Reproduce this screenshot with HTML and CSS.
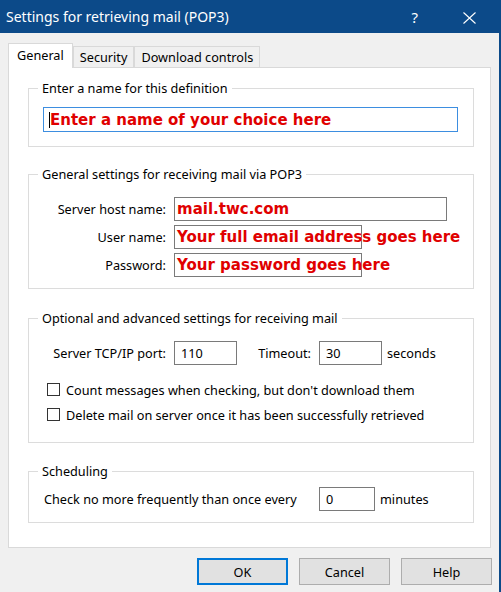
FILE: index.html
```html
<!DOCTYPE html>
<html lang="en">
<head>
<meta charset="utf-8">
<title>Settings for retrieving mail (POP3)</title>
<link rel="stylesheet" href="styles.css">
</head>
<body>
<div class="window">
  <div class="titlebar">
    <span class="title">Settings for retrieving mail (POP3)</span>
    <span class="tb-help">?</span>
    <svg class="tb-close" width="13" height="12" viewBox="0 0 13 12" aria-hidden="true"><path d="M0.5 0.5 L12.5 11.5 M12.5 0.5 L0.5 11.5" stroke="#fff" stroke-width="1.1" fill="none"/></svg>
  </div>
  <div class="frame">
    <div class="tabs">
      <div class="tab active">General</div>
      <div class="tab">Security</div>
      <div class="tab">Download controls</div>
    </div>
    <div class="panel">
      <fieldset class="group">
        <legend>Enter a name for this definition</legend>
        <div class="gb gb1">
          <div class="field focus"><span class="caret"></span><span class="val">Enter a name of your choice here</span></div>
        </div>
      </fieldset>

      <fieldset class="group g2">
        <legend>General settings for receiving mail via POP3</legend>
        <div class="gb gb2">
          <span class="lbl">Server host name:</span>
          <div class="field red f-host"><span class="val">mail.twc.com</span></div>
          <span class="lbl">User name:</span>
          <div class="field red f-user"><span class="val">Your full email address goes here</span></div>
          <span class="lbl">Password:</span>
          <div class="field red f-user"><span class="val">Your password goes here</span></div>
        </div>
      </fieldset>

      <fieldset class="group g3">
        <legend>Optional and advanced settings for receiving mail</legend>
        <div class="gb gb3">
          <div class="port-row">
            <span class="lbl lbl-port">Server TCP/IP port:</span>
            <div class="field num f-num">110</div>
            <span class="lbl lbl-timeout">Timeout:</span>
            <div class="field num f-num">30</div>
            <span class="unit">seconds</span>
          </div>
          <div class="checks">
            <div class="check"><span class="box"></span><span>Count messages when checking, but don't download them</span></div>
            <div class="check"><span class="box"></span><span>Delete mail on server once it has been successfully retrieved</span></div>
          </div>
        </div>
      </fieldset>

      <fieldset class="group g4">
        <legend>Scheduling</legend>
        <div class="gb gb4">
          <span class="lbl-sched">Check no more frequently than once every</span>
          <div class="field num f-min">0</div>
          <span class="unit">minutes</span>
        </div>
      </fieldset>
    </div>
    <div class="buttons">
      <div class="btn default">OK</div>
      <div class="btn">Cancel</div>
      <div class="btn">Help</div>
    </div>
  </div>
</div>
</body>
</html>
```
FILE: styles.css
```css
html, body {
  margin: 0;
  padding: 0;
}
body {
  font-family: "Noto Sans", "Open Sans", sans-serif;
  font-size: 12.7px;
  color: #000;
  background: #f0f0f0;
}
.window {
  width: 501px;
  height: 592px;
  display: flex;
  flex-direction: column;
  background: #f0f0f0;
  overflow: hidden;
}
.titlebar {
  flex: none;
  height: 33px;
  background: #0c4a89;
  color: #fff;
  display: flex;
  align-items: center;
  padding-left: 6px;
}
.title {
  flex: 1;
  font-size: 14px;
  line-height: 20px;
  white-space: nowrap;
}
.tb-help {
  font-size: 15px;
  line-height: 20px;
  margin-right: 45px;
}
.tb-close {
  margin-right: 25px;
  margin-top: 2px;
}
.frame {
  flex: 1;
  display: flex;
  flex-direction: column;
  border-right: 2px solid #0c4a89;
  padding: 10px 0 0 8px;
}
.tabs {
  display: flex;
  align-items: flex-end;
  height: 24px;
}
.tab {
  box-sizing: border-box;
  height: 21px;
  border: 1px solid #d9d9d9;
  border-bottom: none;
  background: #f0f0f0;
  padding: 0 6px;
  line-height: 20px;
  white-space: nowrap;
}
.tab.active {
  position: relative;
  z-index: 1;
  height: 25px;
  margin-bottom: -1px;
  background: #fff;
  padding: 0 8px;
  line-height: 22px;
}
.panel {
  box-sizing: border-box;
  width: 483px;
  height: 481px;
  border: 1px solid #d9d9d9;
  background: #fff;
  padding: 12px 0 0 19px;
}
.group {
  box-sizing: border-box;
  width: 446px;
  min-width: 0;
  margin: 0;
  padding: 0;
  border: 1px solid #dcdcdc;
}
.group legend {
  padding: 0 4px;
  margin-left: 9px;
  line-height: 16px;
  white-space: nowrap;
}
.g2 { margin-top: 19px; }
.g3 { margin-top: 21px; }
.g4 { margin-top: 20px; }

.field {
  box-sizing: border-box;
  height: 24px;
  border: 1px solid #7a7a7a;
  background: #fff;
  display: flex;
  align-items: center;
  white-space: nowrap;
}
.field.focus {
  height: 25px;
  border-color: #3d8ee0;
  padding-left: 5px;
}
.caret {
  flex: none;
  width: 1px;
  height: 16px;
  background: #000;
}
.val {
  color: #e00000;
  font-family: "DejaVu Sans", Verdana, sans-serif;
  font-weight: bold;
  font-size: 15px;
  line-height: 22px;
  white-space: nowrap;
}
.field.red {
  padding-left: 2px;
  overflow: visible;
}
.gb1 {
  padding: 11px 15px 14px 14px;
}
.gb2 {
  display: grid;
  grid-template-columns: 145px auto;
  row-gap: 4px;
  align-items: center;
  justify-items: start;
  padding: 15px 0 11px 0;
}
.lbl {
  box-sizing: border-box;
  text-align: right;
  padding-right: 8px;
  white-space: nowrap;
  justify-self: stretch;
}
.f-host { width: 273px; }
.f-user { width: 188px; }

.gb3 {
  padding: 15px 0 19px 0;
}
.port-row {
  display: flex;
  align-items: center;
  height: 24px;
}
.lbl-port { width: 145px; flex: none; }
.lbl-timeout { width: 82px; flex: none; }
.field.num {
  padding-left: 6px;
}
.f-num { width: 63px; flex: none; }
.unit {
  margin-left: 5px;
  white-space: nowrap;
}
.checks {
  margin-top: 16px;
  display: flex;
  flex-direction: column;
  gap: 8px;
}
.check {
  display: flex;
  align-items: center;
  height: 17px;
  padding-left: 18px;
  white-space: nowrap;
}
.box {
  flex: none;
  box-sizing: border-box;
  width: 13px;
  height: 13px;
  border: 1px solid #333;
  background: #fff;
  margin-right: 6px;
}
.gb4 {
  display: flex;
  align-items: center;
  padding: 8px 0 11px 15px;
}
.lbl-sched {
  width: 275px;
  flex: none;
  white-space: nowrap;
}
.f-min { width: 56px; flex: none; }

.buttons {
  display: flex;
  justify-content: flex-end;
  gap: 11px;
  margin-top: 10px;
  padding-right: 7px;
}
.btn {
  box-sizing: border-box;
  width: 91px;
  height: 27px;
  border: 1px solid #adadad;
  background: #e1e1e1;
  display: flex;
  align-items: center;
  justify-content: center;
}
.btn.default {
  border: 2px solid #0078d7;
}
```
